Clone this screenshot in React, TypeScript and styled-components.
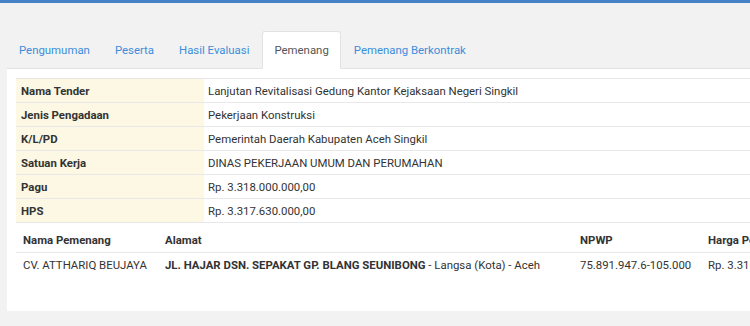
import React from "react"
import styled, { createGlobalStyle } from "styled-components"

const GlobalStyle = createGlobalStyle`
  html, body {
    margin: 0;
    padding: 0;
    background: #f2f2f2;
    font-family: Roboto, "Liberation Sans", Arial, sans-serif;
    font-size: 11.4px;
    color: #333;
    overflow: hidden;
  }
`

const TopBar = styled.div`
  height: 3px;
  background: #4683c6;
`

const Page = styled.div`
  padding: 28px 0 0 7px;
  width: 800px;
`

const Tabs = styled.ul`
  display: flex;
  margin: 0;
  padding: 0;
  list-style: none;
  border-bottom: 1px solid #e2e2e2;
  height: 37px;
`

const Tab = styled.li<{ $active?: boolean }>`
  display: flex;
  align-items: center;
  padding: 0 11px;
  margin-right: 1px;
  margin-bottom: -1px;
  font-size: 11.4px;
  color: ${(p) => (p.$active ? "#555" : "#3b8edb")};
  background: ${(p) => (p.$active ? "#fff" : "transparent")};
  border: 1px solid ${(p) => (p.$active ? "#e2e2e2" : "transparent")};
  border-bottom-color: ${(p) => (p.$active ? "#fff" : "transparent")};
  border-radius: 3px 3px 0 0;
`

const Panel = styled.div`
  background: #fff;
  padding: 9px 0 34px 9px;
`

const InfoTable = styled.table`
  border-collapse: collapse;
  width: 790px;
`

const InfoRow = styled.tr`
  height: 24px;
  border-top: 1px solid #e8e8e8;
  &:last-child {
    border-bottom: 1px solid #e8e8e8;
  }
`

const Label = styled.th`
  width: 178px;
  padding: 0 5px;
  text-align: left;
  font-weight: bold;
  background: #fcf8e3;
`

const Value = styled.td`
  padding: 0 4px;
`

const WinnerTable = styled.table`
  border-collapse: collapse;
  table-layout: fixed;
  width: 790px;
  margin-top: 5px;
`

const HeadCell = styled.th<{ $w: number }>`
  box-sizing: border-box;
  width: ${(p) => p.$w}px;
  height: 24px;
  padding: 0 7px;
  text-align: left;
  font-weight: bold;
  border-bottom: 1px solid #e8e8e8;
  white-space: nowrap;
  overflow: hidden;
`

const Cell = styled.td`
  height: 24px;
  padding: 0 7px;
  white-space: nowrap;
  overflow: hidden;
`

const info: [string, string][] = [
  ["Nama Tender", "Lanjutan Revitalisasi Gedung Kantor Kejaksaan Negeri Singkil"],
  ["Jenis Pengadaan", "Pekerjaan Konstruksi"],
  ["K/L/PD", "Pemerintah Daerah Kabupaten Aceh Singkil"],
  ["Satuan Kerja", "DINAS PEKERJAAN UMUM DAN PERUMAHAN"],
  ["Pagu", "Rp. 3.318.000.000,00"],
  ["HPS", "Rp. 3.317.630.000,00"],
]

const tabs = ["Pengumuman", "Peserta", "Hasil Evaluasi", "Pemenang", "Pemenang Berkontrak"]

const App = () => {
  return (
    <>
      <GlobalStyle />
      <TopBar />
      <Page>
        <Tabs>
          {tabs.map((t) => (
            <Tab key={t} $active={t === "Pemenang"}>
              {t}
            </Tab>
          ))}
        </Tabs>
        <Panel>
          <InfoTable>
            <tbody>
              {info.map(([k, v]) => (
                <InfoRow key={k}>
                  <Label>{k}</Label>
                  <Value>{v}</Value>
                </InfoRow>
              ))}
            </tbody>
          </InfoTable>
          <WinnerTable>
            <thead>
              <tr>
                <HeadCell $w={142}>Nama Pemenang</HeadCell>
                <HeadCell $w={415}>Alamat</HeadCell>
                <HeadCell $w={128}>NPWP</HeadCell>
                <HeadCell $w={105}>Harga Penawaran</HeadCell>
              </tr>
            </thead>
            <tbody>
              <tr>
                <Cell>CV. ATTHARIQ BEUJAYA</Cell>
                <Cell>
                  <b>JL. HAJAR DSN. SEPAKAT GP. BLANG SEUNIBONG</b> - Langsa (Kota) - Aceh
                </Cell>
                <Cell>75.891.947.6-105.000</Cell>
                <Cell>Rp. 3.316.000.000,00</Cell>
              </tr>
            </tbody>
          </WinnerTable>
        </Panel>
      </Page>
    </>
  )
}

export default App
